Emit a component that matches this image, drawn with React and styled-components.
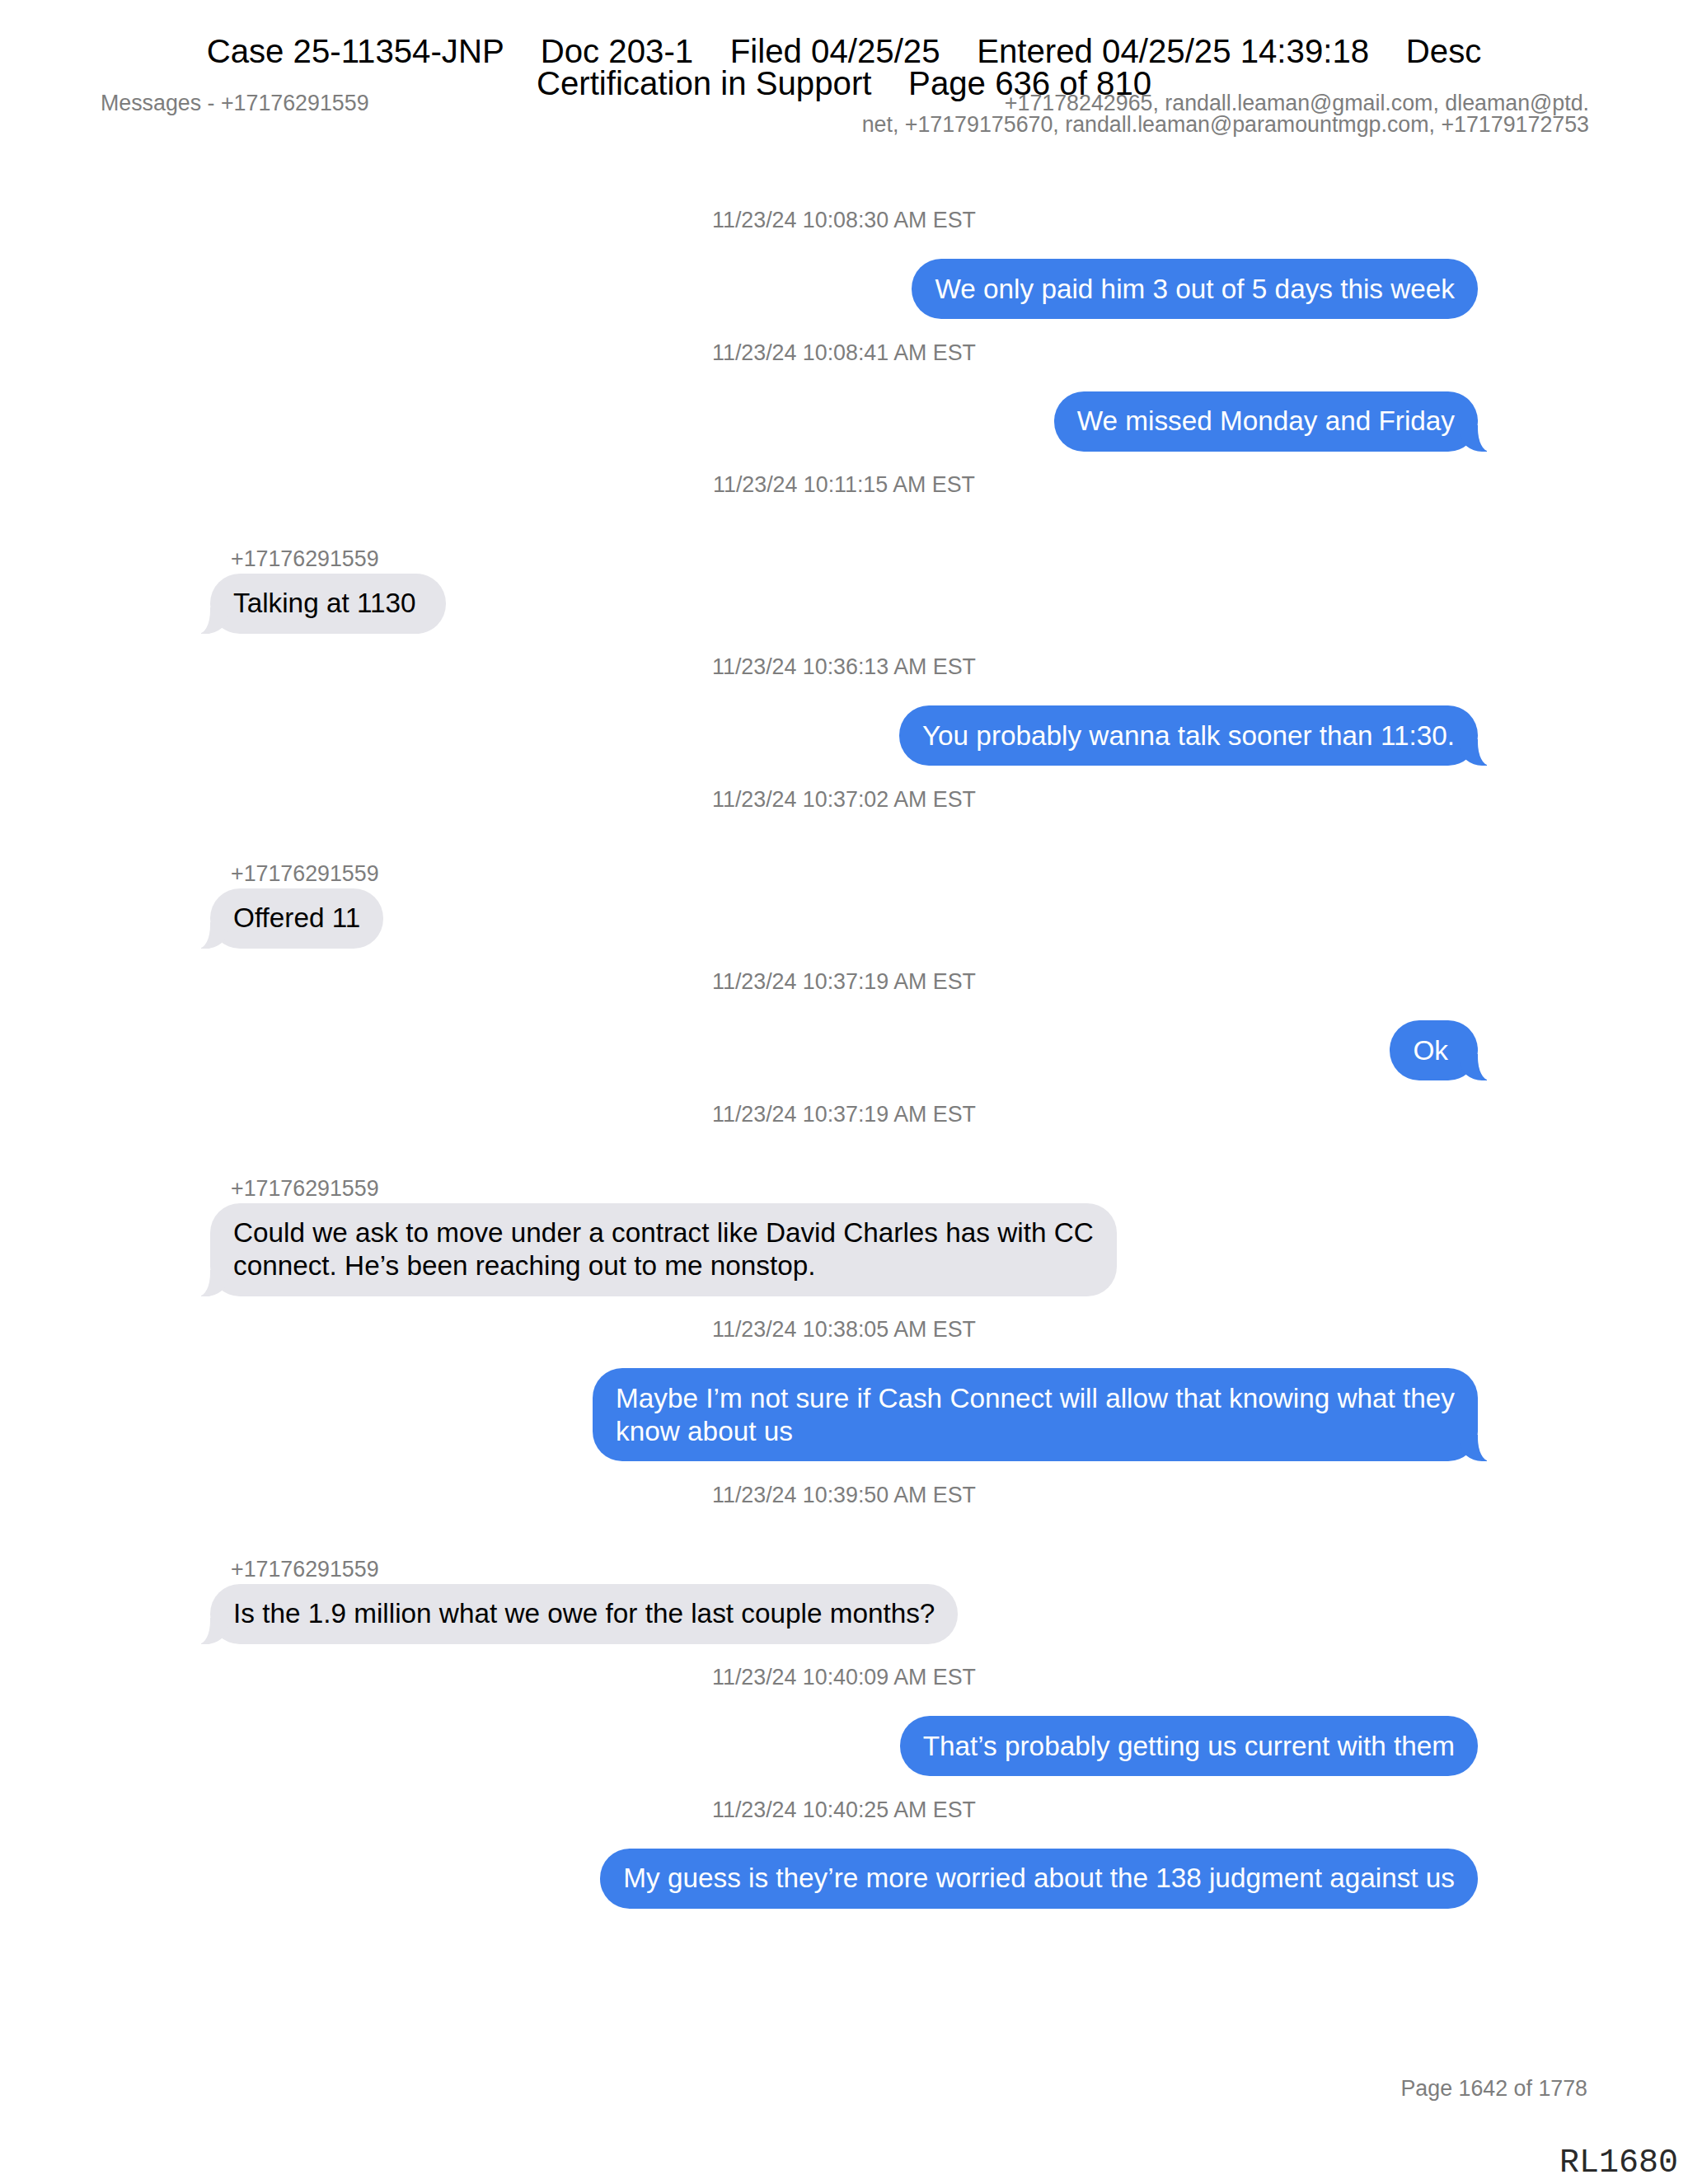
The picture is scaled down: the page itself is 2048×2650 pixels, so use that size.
import React from "react";
import styled, { createGlobalStyle, css } from "styled-components";

const GlobalStyle = createGlobalStyle`
  html, body {
    margin: 0;
    padding: 0;
    background: #fff;
  }
  body {
    font-family: "Liberation Sans", Arial, sans-serif;
  }
`;

const Page = styled.div`
  position: relative;
  width: 2048px;
  min-height: 2650px;
  background: #fff;
  display: flex;
  flex-direction: column;
`;

// court filing stamp printed over the top of the page
const CourtStamp = styled.div`
  position: absolute;
  top: 43px;
  left: 0;
  right: 0;
  text-align: center;
  font-size: 40.2px;
  line-height: 39px;
  color: #000;
  white-space: pre;
`;

const Header = styled.header`
  display: flex;
  justify-content: space-between;
  align-items: flex-start;
  padding: 112px 120px 0 122px;
  font-size: 26.8px;
  line-height: 26px;
  color: #7d7d7d;
`;

const Participants = styled.div`
  text-align: right;
`;

const Thread = styled.main`
  display: flex;
  flex-direction: column;
  gap: 25.5px;
  margin-top: 88px;
  padding: 0 255px;
`;

const Entry = styled.section`
  display: flex;
  flex-direction: column;
`;

const Stamp = styled.div`
  text-align: center;
  font-size: 26.8px;
  line-height: 30px;
  color: #7d7d7d;
  margin-bottom: 32px;
`;

const Sender = styled.div`
  font-size: 26.8px;
  line-height: 30px;
  color: #7d7d7d;
  padding-left: 25px;
  margin: 27.6px 0 3.4px;
`;

const Row = styled.div`
  display: flex;
  justify-content: ${(p) => (p.$me ? "flex-end" : "flex-start")};
`;

const Bubble = styled.div`
  position: relative;
  box-sizing: border-box;
  padding: 16.5px ${(p) => (p.$wide ? "36px" : "28px")} 16.5px 28px;
  border-radius: 36px;
  font-size: 33.3px;
  line-height: 40px;
  white-space: nowrap;
  background: ${(p) => (p.$me ? "#3d7feb" : "#e5e5ea")};
  color: ${(p) => (p.$me ? "#fff" : "#000")};
  ${(p) =>
    p.$tail &&
    css`
      &::before {
        content: "";
        position: absolute;
        bottom: 0;
        width: 32px;
        height: 32px;
        background: inherit;
        ${p.$me
          ? "right: -11px; border-bottom-left-radius: 26px 22px;"
          : "left: -11px; border-bottom-right-radius: 26px 22px;"}
      }
      &::after {
        content: "";
        position: absolute;
        bottom: 0;
        width: 20px;
        height: 32px;
        background: #fff;
        ${p.$me
          ? "right: -20px; border-bottom-left-radius: 14px 28px;"
          : "left: -20px; border-bottom-right-radius: 14px 28px;"}
      }
    `}
`;

const Footer = styled.footer`
  margin-top: 203px;
  padding-right: 122px;
  text-align: right;
  font-size: 26.8px;
  line-height: 30px;
  color: #7d7d7d;
`;

const Bates = styled.div`
  margin-top: 54px;
  padding-right: 12px;
  text-align: right;
  font-family: "Liberation Mono", "Courier New", monospace;
  font-size: 40px;
  line-height: 44px;
  color: #2a2a2a;
`;

const PHONE = "+17176291559";

// lines are kept as the export printed them
const messages = [
  { time: "11/23/24 10:08:30 AM EST", me: true, lines: ["We only paid him 3 out of 5 days this week"] },
  { time: "11/23/24 10:08:41 AM EST", me: true, tail: true, lines: ["We missed Monday and Friday"] },
  { time: "11/23/24 10:11:15 AM EST", me: false, tail: true, wide: true, lines: ["Talking at 1130"] },
  { time: "11/23/24 10:36:13 AM EST", me: true, tail: true, lines: ["You probably wanna talk sooner than 11:30."] },
  { time: "11/23/24 10:37:02 AM EST", me: false, tail: true, lines: ["Offered 11"] },
  { time: "11/23/24 10:37:19 AM EST", me: true, tail: true, wide: true, lines: ["Ok"] },
  {
    time: "11/23/24 10:37:19 AM EST",
    me: false,
    tail: true,
    lines: [
      "Could we ask to move under a contract like David Charles has with CC",
      "connect. He’s been reaching out to me nonstop.",
    ],
  },
  {
    time: "11/23/24 10:38:05 AM EST",
    me: true,
    tail: true,
    lines: ["Maybe I’m not sure if Cash Connect will allow that knowing what they", "know about us"],
  },
  { time: "11/23/24 10:39:50 AM EST", me: false, tail: true, lines: ["Is the 1.9 million what we owe for the last couple months?"] },
  { time: "11/23/24 10:40:09 AM EST", me: true, lines: ["That’s probably getting us current with them"] },
  { time: "11/23/24 10:40:25 AM EST", me: true, lines: ["My guess is they’re more worried about the 138 judgment against us"] },
];

export default function App() {
  return (
    <Page>
      <GlobalStyle />
      <CourtStamp>
        {"Case 25-11354-JNP    Doc 203-1    Filed 04/25/25    Entered 04/25/25 14:39:18    Desc\nCertification in Support    Page 636 of 810"}
      </CourtStamp>
      <Header>
        <div>Messages - {PHONE}</div>
        <Participants>
          +17178242965, randall.leaman@gmail.com, dleaman@ptd.
          <br />
          net, +17179175670, randall.leaman@paramountmgp.com, +17179172753
        </Participants>
      </Header>
      <Thread>
        {messages.map((m, i) => (
          <Entry key={i}>
            <Stamp>{m.time}</Stamp>
            {!m.me && <Sender>{PHONE}</Sender>}
            <Row $me={m.me}>
              <Bubble $me={m.me} $tail={m.tail} $wide={m.wide}>
                {m.lines.map((line, j) => (
                  <React.Fragment key={j}>
                    {j > 0 && <br />}
                    {line}
                  </React.Fragment>
                ))}
              </Bubble>
            </Row>
          </Entry>
        ))}
      </Thread>
      <Footer>Page 1642 of 1778</Footer>
      <Bates>RL1680</Bates>
    </Page>
  );
}
